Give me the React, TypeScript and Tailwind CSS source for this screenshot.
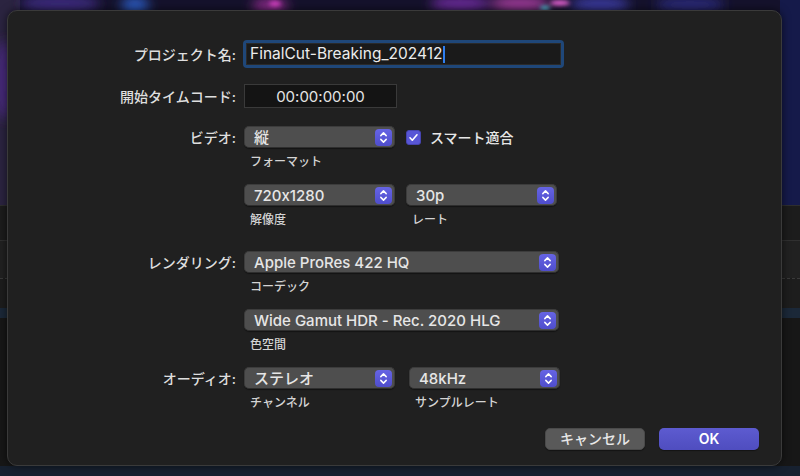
import React from "react";

const Chevrons = () => (
  <svg width="9" height="13" viewBox="0 0 9 13" fill="none">
    <path d="M1.8 4.6 L4.5 1.9 L7.2 4.6" stroke="white" strokeWidth="1.5" strokeLinecap="round" strokeLinejoin="round" />
    <path d="M1.8 8.4 L4.5 11.1 L7.2 8.4" stroke="white" strokeWidth="1.5" strokeLinecap="round" strokeLinejoin="round" />
  </svg>
);

const Popup = ({ value, w }: { value: string; w: string }) => (
  <div
    className={`${w} h-[22px] flex items-center justify-between rounded-[5px] bg-[#4e4e4e] border border-[#3c3c3c] border-b-[#2e2e2e] shadow-[0_1px_1px_rgba(0,0,0,0.4)] pl-[9px] pr-[2px]`}
  >
    <span className="text-[15px] font-medium text-[#e6e6e6] leading-none">{value}</span>
    <div className="w-[17px] h-[17px] rounded-[4px] bg-gradient-to-b from-[#6664e4] to-[#4f4dcc] flex items-center justify-center">
      <Chevrons />
    </div>
  </div>
);

const Caption = ({ children, className = "" }: { children: React.ReactNode; className?: string }) => (
  <div className={`text-[12px] font-medium text-[#d4d4d4] leading-[14px] h-[14px] pl-[6px] ${className}`}>{children}</div>
);

const Label = ({ children }: { children: React.ReactNode }) => (
  <div className="w-[228px] shrink-0 text-right text-[14px] font-medium text-[#dedede]">{children}</div>
);

export default function App() {
  return (
    <div className="relative w-[800px] h-[476px] overflow-hidden bg-[#161616] font-['Inter','Noto_Sans_CJK_JP',sans-serif] [font-feature-settings:'calt'_0]">
      {/* background app */}
      <div className="flex flex-col w-full h-full">
        <div className="relative h-[205px] bg-[#16122e] overflow-hidden">
          <svg className="absolute inset-0" width="800" height="205" viewBox="0 0 800 205">
            <defs>
              <filter id="b" x="-50%" y="-50%" width="200%" height="200%">
                <feGaussianBlur stdDeviation="6" />
              </filter>
              <filter id="b2" x="-50%" y="-50%" width="200%" height="200%">
                <feGaussianBlur stdDeviation="2" />
              </filter>
            </defs>
            <rect x="0" y="0" width="800" height="205" fill="#15122c" />
            <rect x="0" y="0" width="20" height="205" fill="#2b2440" />
            <rect x="780" y="0" width="20" height="205" fill="#151a4a" />
            <g filter="url(#b)">
              <ellipse cx="60" cy="4" rx="40" ry="10" fill="#3b2a7a" />
              <ellipse cx="135" cy="6" rx="14" ry="10" fill="#2a56b8" />
              <ellipse cx="270" cy="6" rx="18" ry="8" fill="#8a2a8a" />
              <ellipse cx="460" cy="4" rx="30" ry="8" fill="#6a2a9a" />
              <ellipse cx="520" cy="4" rx="30" ry="8" fill="#a03a9a" />
              <ellipse cx="600" cy="5" rx="30" ry="8" fill="#3a3aa0" />
              <ellipse cx="690" cy="5" rx="35" ry="8" fill="#2a2a7a" />
              <ellipse cx="5" cy="80" rx="10" ry="40" fill="#4a2a80" />
            </g>
            <g filter="url(#b2)">
              <ellipse cx="560" cy="3" rx="10" ry="3" fill="#e060d0" />
              <ellipse cx="545" cy="8" rx="5" ry="2" fill="#50d0e0" />
              <ellipse cx="275" cy="4" rx="6" ry="3" fill="#d040c0" />
            </g>
          </svg>
        </div>
        <div className="h-[35px] bg-[#1c1c1c] border-t border-[#2e2e2e]" />
        <div className="h-[38px] bg-[#212121] border-t border-[#303030]" />
        <div className="h-[30px] bg-[#1d1d1d] border-t border-dashed border-[#3a3a3a]" />
        <div className="h-[10px] bg-[#1b2838]" />
        <div className="h-[148px] bg-[#171717]" />
        <div className="flex-1 bg-[#172130]" />
      </div>

      {/* dialog */}
      <div className="absolute left-[7px] top-[10px] w-[775px] h-[456px] rounded-[10px] bg-[#202020] border border-[#3a3a3a] shadow-[0_0_8px_rgba(0,0,0,0.6)] flex flex-col pt-[29px]">
        {/* Project name */}
        <div className="flex items-center h-[28px]">
          <Label>プロジェクト名:</Label>
          <div className="ml-[7px] w-[321px] h-[28px] rounded-[4px] bg-[#1f4779] p-[3px]">
            <div className="w-full h-full bg-[#1a1a1a] border border-[#2a2a2a] flex items-center pl-[3px]">
              <span className="text-[15.5px] text-[#ececec] leading-none">FinalCut-Breaking_202412</span>
              <span className="w-[2px] h-[17px] bg-[#2f7ff0] ml-[1px]" />
            </div>
          </div>
        </div>

        {/* Timecode */}
        <div className="flex items-center h-[24px] mt-[16px]">
          <Label>開始タイムコード:</Label>
          <div className="ml-[8px] w-[153px] h-[24px] bg-[#141414] border border-[#3a3a3a] flex items-center justify-center">
            <span className="text-[15px] text-[#e4e4e4] leading-none">00:00:00:00</span>
          </div>
        </div>

        {/* Video */}
        <div className="flex items-center h-[22px] mt-[18px]">
          <Label>ビデオ:</Label>
          <div className="ml-[8px] flex items-center">
            <Popup value="縦" w="w-[151px]" />
            <div className="ml-[11px] w-[15px] h-[15px] rounded-[3px] bg-[#5856d6] border border-[#4644b0] flex items-center justify-center">
              <svg width="11" height="11" viewBox="0 0 11 11" fill="none">
                <path d="M2 5.8 L4.3 8.2 L9 2.8" stroke="white" strokeWidth="1.6" strokeLinecap="round" strokeLinejoin="round" />
              </svg>
            </div>
            <span className="ml-[9px] text-[14px] font-medium text-[#e6e6e6]">スマート適合</span>
          </div>
        </div>
        <div className="flex mt-[7px]">
          <div className="w-[236px] shrink-0" />
          <Caption>フォーマット</Caption>
        </div>

        {/* resolution / rate */}
        <div className="flex items-center h-[22px] mt-[15px]">
          <div className="w-[236px] shrink-0" />
          <Popup value="720x1280" w="w-[151px]" />
          <div className="ml-[11px]">
            <Popup value="30p" w="w-[151px]" />
          </div>
        </div>
        <div className="flex mt-[7px]">
          <div className="w-[236px] shrink-0" />
          <div className="w-[162px]">
            <Caption>解像度</Caption>
          </div>
          <Caption>レート</Caption>
        </div>

        {/* Rendering */}
        <div className="flex items-center h-[22px] mt-[24px]">
          <Label>レンダリング:</Label>
          <div className="ml-[8px]">
            <Popup value="Apple ProRes 422 HQ" w="w-[315px]" />
          </div>
        </div>
        <div className="flex mt-[7px]">
          <div className="w-[236px] shrink-0" />
          <Caption>コーデック</Caption>
        </div>

        <div className="flex items-center h-[22px] mt-[15px]">
          <div className="w-[236px] shrink-0" />
          <Popup value="Wide Gamut HDR - Rec. 2020 HLG" w="w-[315px]" />
        </div>
        <div className="flex mt-[7px]">
          <div className="w-[236px] shrink-0" />
          <Caption>色空間</Caption>
        </div>

        {/* Audio */}
        <div className="flex items-center h-[22px] mt-[15px]">
          <Label>オーディオ:</Label>
          <div className="ml-[8px] flex">
            <Popup value="ステレオ" w="w-[151px]" />
            <div className="ml-[14px]">
              <Popup value="48kHz" w="w-[151px]" />
            </div>
          </div>
        </div>
        <div className="flex mt-[7px]">
          <div className="w-[236px] shrink-0" />
          <div className="w-[165px]">
            <Caption>チャンネル</Caption>
          </div>
          <Caption>サンプルレート</Caption>
        </div>

        {/* Buttons */}
        <div className="flex justify-end mt-[18px] pr-[22px] gap-[14px]">
          <button className="w-[100px] h-[22px] rounded-[5px] bg-[#595959] border border-[#4a4a4a] shadow-[0_1px_1px_rgba(0,0,0,0.4)] text-[14px] font-medium text-[#e8e8e8] leading-none">
            キャンセル
          </button>
          <button className="w-[100px] h-[22px] rounded-[5px] bg-gradient-to-b from-[#5d5bd0] to-[#4f4dbf] shadow-[0_1px_1px_rgba(0,0,0,0.4)] text-[14px] font-semibold text-white leading-none">
            OK
          </button>
        </div>
      </div>
    </div>
  );
}
